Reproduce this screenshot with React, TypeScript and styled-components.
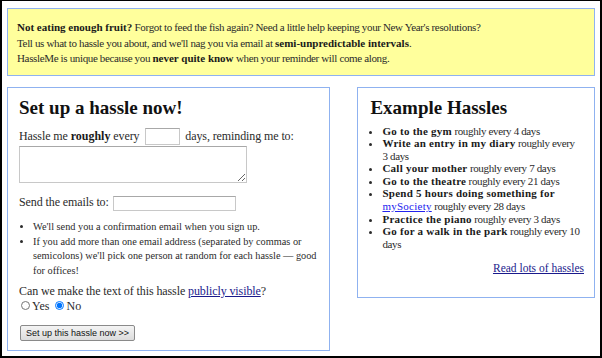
import React from 'react';
import styled, { createGlobalStyle } from 'styled-components';

const GlobalStyle = createGlobalStyle`
  html, body {
    margin: 0;
    padding: 0;
    background: #fff;
  }
  body {
    font-family: 'Liberation Serif', Georgia, serif;
    color: #2b2b2b;
  }
`;

export default function App() {
  return (
    <Frame>
      <GlobalStyle />
      <Intro>
        <b>Not eating enough fruit?</b> Forgot to feed the fish again? Need a little help keeping
        your New Year's resolutions?
        <br />
        Tell us what to hassle you about, and we'll nag you via email at{' '}
        <b>semi-unpredictable intervals</b>.
        <br />
        HassleMe is unique because you <b>never quite know</b> when your reminder will come along.
      </Intro>

      <Columns>
        <Panel>
          <Heading>Set up a hassle now!</Heading>
          <FormLine>
            Hassle me <b>roughly</b> every <DaysInput type="text" /> days, reminding me to:
          </FormLine>
          <WhatBox />
          <FormLine $gap={10}>
            Send the emails to: <EmailInput type="text" />
          </FormLine>
          <Notes>
            <li>We'll send you a confirmation email when you sign up.</li>
            <li>
              If you add more than one email address (separated by commas or semicolons) we'll
              pick one person at random for each hassle — good for offices!
            </li>
          </Notes>
          <FormLine $gap={4} $height={16}>
            Can we make the text of this hassle <Link href="#">publicly visible</Link>?
          </FormLine>
          <Radios>
            <label>
              <input type="radio" name="public" /> Yes
            </label>
            <label>
              <input type="radio" name="public" defaultChecked /> No
            </label>
          </Radios>
          <SubmitButton type="button">Set up this hassle now &gt;&gt;</SubmitButton>
        </Panel>

        <SidePanel>
          <Heading $gap={5}>Example Hassles</Heading>
          <Examples>
            {EXAMPLES.map((ex, key) => (
              <li key={key}>
                <b>{ex.what}</b>
                {ex.link && (
                  <>
                    {' '}
                    <BrightLink href="#">{ex.link}</BrightLink>
                  </>
                )}{' '}
                roughly every {ex.days} days
              </li>
            ))}
          </Examples>
          <MoreLink>
            <Link href="#">Read lots of hassles</Link>
          </MoreLink>
        </SidePanel>
      </Columns>
    </Frame>
  );
}

const EXAMPLES = [
  { what: 'Go to the gym', days: 4 },
  { what: 'Write an entry in my diary', days: 3 },
  { what: 'Call your mother', days: 7 },
  { what: 'Go to the theatre', days: 21 },
  { what: 'Spend 5 hours doing something for', link: 'mySociety', days: 28 },
  { what: 'Practice the piano', days: 3 },
  { what: 'Go for a walk in the park', days: 10 },
];

const Frame = styled.div`
  width: 602px;
  height: 358px;
  box-sizing: border-box;
  border: 2px solid #000;
  border-top-width: 1px;
  padding: 7px 5px 0 5px;
  overflow: hidden;
`;

const Intro = styled.div`
  width: 588px;
  box-sizing: border-box;
  background: #ffff9c;
  border: 1px solid #8fb2f0;
  padding: 11px 9px 8px 9px;
  font-size: 11px;
  line-height: 15.5px;
  letter-spacing: -0.35px;
  color: #2b2b2b;

  b {
    letter-spacing: 0;
    color: #1a1a1a;
  }
`;

const Columns = styled.div`
  display: flex;
  align-items: flex-start;
  gap: 27px;
  margin-top: 11px;
`;

const Panel = styled.div`
  width: 324px;
  height: 264px;
  box-sizing: border-box;
  border: 1px solid #8fb2f0;
  padding: 8px 11px;
  font-size: 12px;
`;

const SidePanel = styled(Panel)`
  width: 238px;
  height: 211px;
  padding: 8px 10px 8px 12px;
`;

const Heading = styled.h2<{ $gap?: number }>`
  margin: 0 0 ${(p) => p.$gap ?? 7}px;
  font-size: 19px;
  line-height: 24px;
  font-weight: bold;
  color: #111;
`;

const FormLine = styled.div<{ $gap?: number; $height?: number }>`
  margin-top: ${(p) => p.$gap ?? 0}px;
  line-height: ${(p) => p.$height ?? 18}px;
  font-size: 12px;
  letter-spacing: -0.1px;
  color: #2b2b2b;

  b {
    letter-spacing: 0;
    color: #1a1a1a;
  }
`;

const FieldBase = styled.input`
  box-sizing: border-box;
  border: 1px solid #c8c8c8;
  border-top-color: #a8a8a8;
  background: #fff;
  padding: 1px 2px;
  font: 12px 'Liberation Serif', serif;
  vertical-align: middle;
  outline: none;
`;

const DaysInput = styled(FieldBase)`
  width: 35px;
  height: 17px;
  margin: 0 2px 0 3px;
`;

const EmailInput = styled(FieldBase)`
  width: 123px;
  height: 15px;
  margin-left: 1px;
`;

const WhatBox = styled.textarea`
  display: block;
  box-sizing: border-box;
  width: 228px;
  height: 37px;
  margin-top: 1px;
  border: 1px solid #c8c8c8;
  border-top-color: #a8a8a8;
  resize: both;
  outline: none;
`;

const Notes = styled.ul`
  margin: 9px 0 0;
  padding-left: 14px;
  font-size: 10.3px;
  line-height: 14.6px;
  color: #2b2b2b;
`;

const Link = styled.a`
  color: #1a1a8c;
  text-decoration: underline;
`;

const BrightLink = styled.a`
  color: #2222ee;
  text-decoration: underline;
  letter-spacing: 0.25px;
`;

const Radios = styled.div`
  display: flex;
  gap: 4px;
  font-size: 12px;
  line-height: 14px;
  color: #2b2b2b;

  label {
    display: inline-flex;
    align-items: center;
  }

  input {
    margin: 0 2px 0 2px;
    width: 9px;
    height: 9px;
  }
`;

const SubmitButton = styled.button`
  display: block;
  margin: 12px 0 0 1px;
  padding: 0 5px;
  height: 16px;
  font: 9px 'Liberation Sans', Arial, sans-serif;
  color: #111;
  background: linear-gradient(#f4f4f4, #dcdcdc);
  border: 1px solid #8a8a8a;
  border-radius: 2px;
`;

const Examples = styled.ul`
  margin: 0 2.5px 0 0;
  padding-left: 12px;
  font-size: 11px;
  line-height: 12.6px;
  letter-spacing: -0.35px;
  color: #2b2b2b;

  b {
    letter-spacing: 0.25px;
    color: #1a1a1a;
  }
`;

const MoreLink = styled.div`
  margin-top: 12px;
  text-align: right;
  font-size: 11.5px;
`;
